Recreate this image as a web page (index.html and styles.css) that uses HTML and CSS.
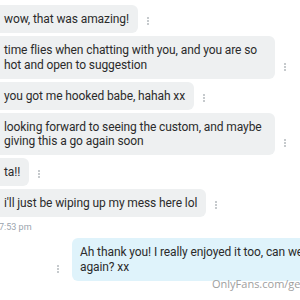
FILE: index.html
```html
<!DOCTYPE html>
<html lang="en">

<head>
    <meta charset="UTF-8">
    <meta name="viewport" content="width=device-width, initial-scale=1.0">
    <title>Chat</title>
    <link rel="stylesheet" href="styles.css">
</head>

<body>
    <div class="chat">
        <div class="msg">
            <div class="bubble">wow, that was amazing!</div>
            <div class="dots"><span></span><span></span><span></span></div>
        </div>
        <div class="msg">
            <div class="bubble">time flies when chatting with you, and you are so hot and open to suggestion</div>
            <div class="dots"><span></span><span></span><span></span></div>
        </div>
        <div class="msg">
            <div class="bubble">you got me hooked babe, hahah xx</div>
            <div class="dots"><span></span><span></span><span></span></div>
        </div>
        <div class="msg">
            <div class="bubble">looking forward to seeing the custom, and maybe giving this a go again soon</div>
            <div class="dots"><span></span><span></span><span></span></div>
        </div>
        <div class="msg">
            <div class="bubble">ta!!</div>
            <div class="dots"><span></span><span></span><span></span></div>
        </div>
        <div class="msg">
            <div class="bubble">i'll just be wiping up my mess here lol</div>
            <div class="dots"><span></span><span></span><span></span></div>
        </div>
        <div class="time">7:53 pm</div>

        <div class="msg mine">
            <div class="dots"><span></span><span></span><span></span></div>
            <div class="bubble">Ah thank you! I really enjoyed it too, can we do it again? xx</div>
        </div>
    </div>

    <div class="watermark">OnlyFans.com/geordie</div>
</body>

</html>
```

FILE: styles.css
```css
/* Basic Reset */
* {
    margin: 0;
    padding: 0;
    box-sizing: border-box;
}

body {
    font-family: 'Roboto', sans-serif;
    background-color: #fff;
    width: 300px;
    height: 300px;
    overflow: hidden;
    position: relative;
}

/* Chat list */
.chat {
    display: flex;
    flex-direction: column;
    gap: 3px;
    padding-top: 5px;
    margin-left: -8px;
    width: 400px;
}

.msg {
    display: flex;
    align-items: flex-end;
}

.bubble {
    max-width: 283px;
    background-color: #eef0f1;
    color: #2b2b2b;
    font-size: 12px;
    letter-spacing: -0.1px;
    line-height: 14.5px;
    padding: 7px 9px 6.5px 12px;
    border-radius: 6px;
}

.dots {
    display: flex;
    flex-direction: column;
    gap: 1px;
    margin: 0 0 8px 9px;
}

.dots span {
    width: 2px;
    height: 2px;
    background-color: #c6cacd;
}

/* Timestamp */
.time {
    font-size: 9px;
    line-height: 10px;
    color: #9aa4ae;
    margin: 2px 0 3px 7px;
}

/* Own message */
.msg.mine {
    margin-left: 65px;
}

.msg.mine .bubble {
    width: 290px;
    max-width: none;
    background-color: #dff3fb;
    padding: 7px 10px 7px 8px;
}

.msg.mine .dots {
    margin: 0 13px 8px 0;
}

/* Watermark */
.watermark {
    position: absolute;
    left: 212px;
    top: 276px;
    font-family: 'Open Sans', sans-serif;
    font-size: 11px;
    color: #9e9e9e;
    white-space: nowrap;
}
```
